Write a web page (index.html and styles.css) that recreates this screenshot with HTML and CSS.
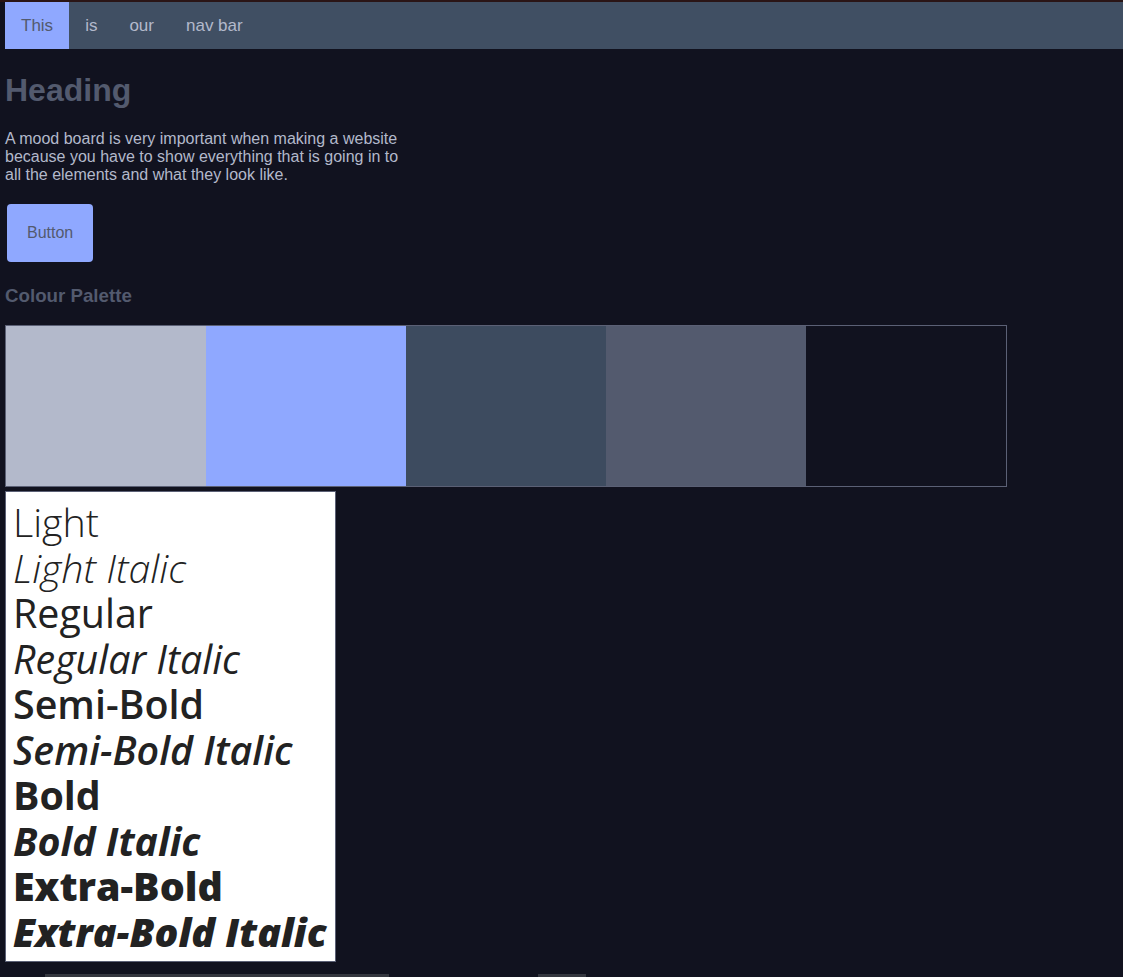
FILE: index.html
```html
<!DOCTYPE html>
<html lang="en">
<head>
<meta charset="utf-8">
<title>Mood Board</title>
<link rel="stylesheet" href="styles.css">
</head>
<body>
<div class="topstrip"></div>
<div class="page">
  <nav class="navbar">
    <a class="nav-item active">This</a>
    <a class="nav-item">is</a>
    <a class="nav-item">our</a>
    <a class="nav-item">nav bar</a>
  </nav>
  <h1 class="heading">Heading</h1>
  <p class="intro">A mood board is very important when making a website because you have to show everything that is going in to all the elements and what they look like.</p>
  <button class="btn">Button</button>
  <h3 class="subheading">Colour Palette</h3>
  <div class="palette">
    <div class="swatch swatch-1"></div>
    <div class="swatch swatch-2"></div>
    <div class="swatch swatch-3"></div>
    <div class="swatch swatch-4"></div>
    <div class="swatch swatch-5"></div>
  </div>
  <div class="typebox">
    <div class="t light">Light</div>
    <div class="t light italic">Light Italic</div>
    <div class="t regular">Regular</div>
    <div class="t regular italic">Regular Italic</div>
    <div class="t semibold">Semi-Bold</div>
    <div class="t semibold italic">Semi-Bold Italic</div>
    <div class="t bold">Bold</div>
    <div class="t bold italic">Bold Italic</div>
    <div class="t extrabold">Extra-Bold</div>
    <div class="t extrabold italic">Extra-Bold Italic</div>
  </div>
  <div class="bottombars">
    <div class="bar bar-a"></div>
    <div class="bar bar-b"></div>
  </div>
</div>
</body>
</html>
```
FILE: styles.css
```css
html, body {
  margin: 0;
  padding: 0;
  background: #11121f;
}

body {
  font-family: "Liberation Sans", Arial, sans-serif;
  color: #b3b9cb;
  overflow: hidden;
  height: 977px;
}

.topstrip {
  height: 2px;
  background: #2a1516;
}

.page {
  padding-left: 5px;
}

.navbar {
  display: flex;
  height: 47px;
  background: #404f63;
}

.nav-item {
  display: block;
  padding: 0 16px;
  line-height: 47px;
  font-size: 17px;
  color: #b3b9cb;
}

.nav-item.active {
  background: #8fa8ff;
  color: #535a6e;
}

.heading {
  margin: 23px 0 21px;
  font-size: 32px;
  font-weight: bold;
  color: #535a6e;
  line-height: 37px;
}

.intro {
  margin: 0;
  width: 400px;
  font-size: 16px;
  line-height: 18px;
  color: #b3b9cb;
}

.btn {
  display: block;
  margin: 20px 0 0 2px;
  padding: 20px;
  width: 86px;
  height: 58px;
  border: none;
  border-radius: 4px;
  background: #8fa8ff;
  color: #535a6e;
  font-family: "Liberation Sans", Arial, sans-serif;
  font-size: 16px;
  line-height: 18px;
}

.subheading {
  margin: 23px 0 19px;
  font-size: 18.72px;
  line-height: 21px;
  font-weight: bold;
  color: #535a6e;
}

.palette {
  display: flex;
  width: 1000px;
  border: 1px solid #5b6075;
}

.swatch {
  width: 200px;
  height: 160px;
}

.swatch-1 { background: #b3b9cb; }
.swatch-2 { background: #8fa8ff; }
.swatch-3 { background: #3d4b5f; }
.swatch-4 { background: #535a6e; }
.swatch-5 { background: #11121f; }

.typebox {
  box-sizing: content-box;
  margin-top: 4px;
  width: 322px;
  height: 461px;
  padding: 8px 0 0 7px;
  border: 1px solid #5b6075;
  background: #ffffff;
  color: #222222;
  font-family: "Open Sans", sans-serif;
  font-size: 39.4px;
}

.t {
  height: 45.5px;
  line-height: 45.5px;
  white-space: nowrap;
}

.light { font-weight: 300; }
.regular { font-weight: 400; }
.semibold { font-weight: 600; }
.bold { font-weight: 700; }
.extrabold { font-weight: 800; }
.italic { font-style: italic; }

.bottombars {
  display: flex;
  margin-top: 12px;
}

.bar {
  height: 3px;
  background: #34363f;
}

.bar-a { margin-left: 40px; width: 344px; }
.bar-b { margin-left: 149px; width: 48px; }
```
